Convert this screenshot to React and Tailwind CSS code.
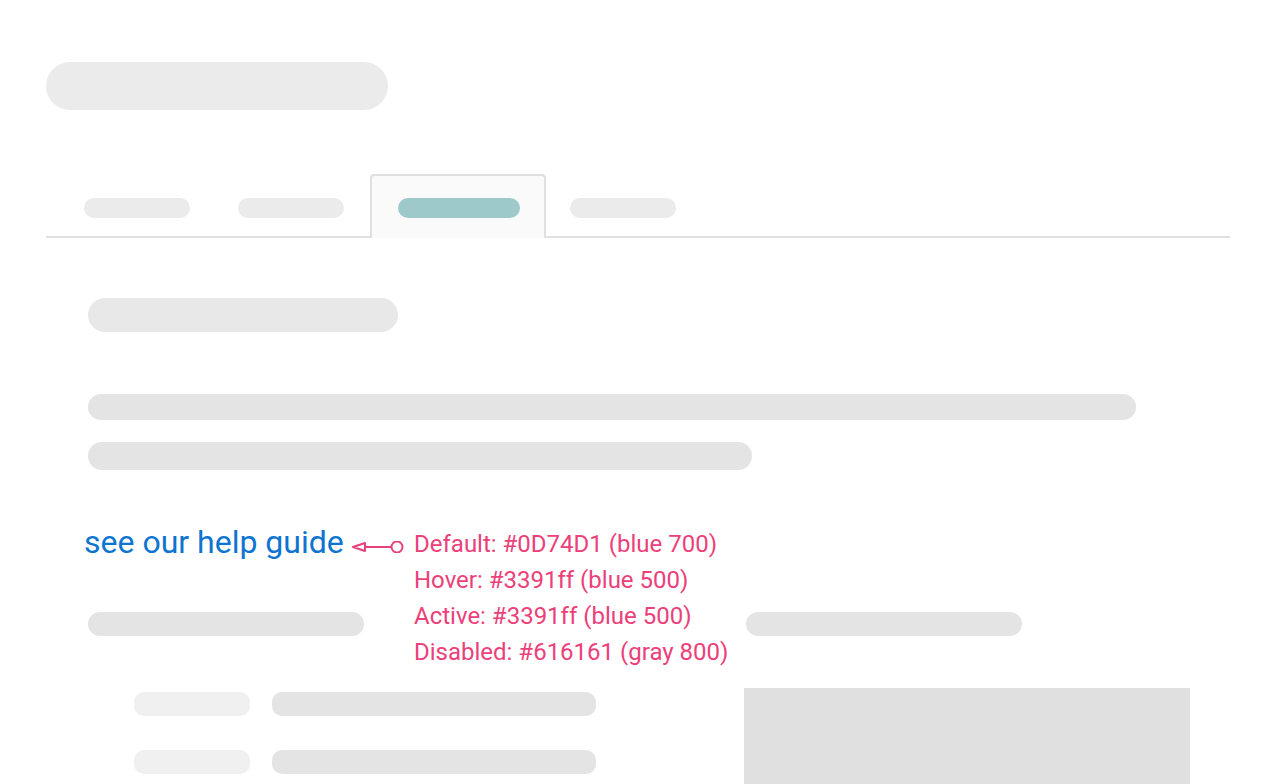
export default function App() {
  return (
    <div className="w-[1270px] h-[784px] overflow-hidden bg-white" style={{ fontFamily: "Roboto, 'Liberation Sans', sans-serif" }}>
      <div className="px-[46px] pt-[62px] w-[1184px] box-content">
        <div className="h-[48px] w-[342px] rounded-full bg-[#ebebeb]" />
        <div className="mt-[64px] h-[64px] border-b-2 border-[#e0e0e0] flex items-start">
          <div className="ml-[38px] mt-[24px] h-[20px] w-[106px] rounded-full bg-[#ebebeb]" />
          <div className="ml-[48px] mt-[24px] h-[20px] w-[106px] rounded-full bg-[#ebebeb]" />
          <div className="ml-[26px] h-[64px] w-[176px] border-2 border-b-0 border-[#e0e0e0] rounded-t-[4px] bg-[#fafafa] pl-[26px] pt-[22px]">
            <div className="h-[20px] w-[122px] rounded-full bg-[#9ec9ca]" />
          </div>
          <div className="ml-[24px] mt-[24px] h-[20px] w-[106px] rounded-full bg-[#ebebeb]" />
        </div>
        <div className="pl-[42px]">
          <div className="mt-[60px] h-[34px] w-[310px] rounded-full bg-[#e8e8e8]" />
          <div className="mt-[62px] h-[26px] w-[1048px] rounded-full bg-[#e4e4e4]" />
          <div className="mt-[22px] h-[28px] w-[664px] rounded-full bg-[#e4e4e4]" />
          <div className="relative mt-[52px] h-[40px]">
            <a className="block -ml-[4px] text-[32px] leading-[40px] text-[#0D74D1]">see our help guide</a>
            <svg className="absolute left-[262px] top-[19px]" width="58" height="12" viewBox="0 0 58 12">
              <path d="M3 6 L15 2 L15 10 Z" fill="none" stroke="#e8407a" strokeWidth="2" strokeLinejoin="round" />
              <line x1="15" y1="6" x2="41.5" y2="6" stroke="#e8407a" strokeWidth="2" />
              <circle cx="47" cy="6" r="5.5" fill="none" stroke="#e8407a" strokeWidth="2" />
            </svg>
            <div className="absolute left-[326px] top-[4px] text-[24px] leading-[36px] text-[#ec407a] whitespace-nowrap">
              <div>Default: #0D74D1 (blue 700)</div>
              <div>Hover: #3391ff (blue 500)</div>
              <div>Active: #3391ff (blue 500)</div>
              <div>Disabled: #616161 (gray 800)</div>
            </div>
          </div>
          <div className="mt-[50px] flex">
            <div className="w-[656px] shrink-0">
              <div className="h-[24px] w-[276px] rounded-full bg-[#e4e4e4]" />
              <div className="mt-[56px] ml-[46px] flex gap-[22px]">
                <div className="h-[24px] w-[116px] rounded-[10px] bg-[#f0f0f0]" />
                <div className="h-[24px] w-[324px] rounded-[10px] bg-[#e4e4e4]" />
              </div>
              <div className="mt-[34px] ml-[46px] flex gap-[22px]">
                <div className="h-[24px] w-[116px] rounded-[10px] bg-[#f0f0f0]" />
                <div className="h-[24px] w-[324px] rounded-[10px] bg-[#e4e4e4]" />
              </div>
            </div>
            <div className="flex-1">
              <div className="ml-[2px] h-[24px] w-[276px] rounded-full bg-[#e4e4e4]" />
              <div className="mt-[52px] h-[120px] w-[446px] bg-[#e0e0e0]" />
            </div>
          </div>
        </div>
      </div>
    </div>
  );
}
